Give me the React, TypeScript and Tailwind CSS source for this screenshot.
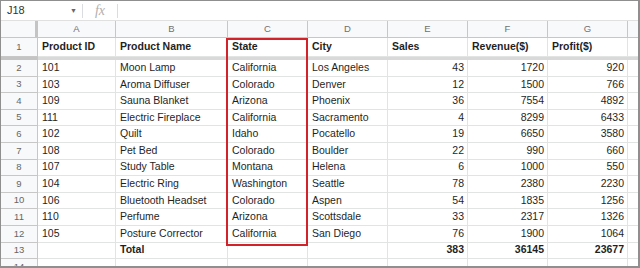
import React from "react";

const rows: (string | number)[][] = [
  [101, "Moon Lamp", "California", "Los Angeles", 43, 1720, 920],
  [103, "Aroma Diffuser", "Colorado", "Denver", 12, 1500, 766],
  [109, "Sauna Blanket", "Arizona", "Phoenix", 36, 7554, 4892],
  [111, "Electric Fireplace", "California", "Sacramento", 4, 8299, 6433],
  [102, "Quilt", "Idaho", "Pocatello", 19, 6650, 3580],
  [108, "Pet Bed", "Colorado", "Boulder", 22, 990, 660],
  [107, "Study Table", "Montana", "Helena", 6, 1000, 550],
  [104, "Electric Ring", "Washington", "Seattle", 78, 2380, 2230],
  [106, "Bluetooth Headset", "Colorado", "Aspen", 54, 1835, 1256],
  [110, "Perfume", "Arizona", "Scottsdale", 33, 2317, 1326],
  [105, "Posture Corrector", "California", "San Diego", 76, 1900, 1064],
];

const widths = ["w-[78px]", "w-[112px]", "w-[80px]", "w-[80px]", "w-[80px]", "w-[80px]", "w-[80px]"];

function RowNum({ n, h }: { n: React.ReactNode; h: string }) {
  return (
    <div
      className={`w-[37px] shrink-0 ${h} bg-[#f8f9fa] border-r border-b border-[#c7c7c7] flex items-center justify-center text-[9.5px] text-[#666]`}
    >
      {n}
    </div>
  );
}

function Cell({
  w,
  children,
  right,
  bold,
}: {
  w: string;
  children?: React.ReactNode;
  right?: boolean;
  bold?: boolean;
}) {
  return (
    <div
      className={`${w} shrink-0 h-full border-r border-b border-[#e2e3e3] flex items-center ${
        right ? "justify-end pr-[3px]" : "pl-[4px]"
      } ${bold ? "font-bold" : ""} text-[10.5px] text-[#1f1f1f] whitespace-nowrap overflow-hidden`}
    >
      {children}
    </div>
  );
}

export default function App() {
  return (
    <div className="w-[640px] h-[268px] overflow-hidden bg-white border-l border-t border-r-2 border-b-2 border-[#8f8f8f] flex flex-col relative font-['Liberation_Sans',Arial,sans-serif]">
      {/* formula bar */}
      <div className="h-[20px] shrink-0 flex items-center border-b border-[#e0e0e0] bg-white">
        <div className="w-[81px] flex items-center pl-[6px] pr-[5px] justify-between">
          <span className="text-[11px] text-[#333]">J18</span>
          <span className="text-[7px] text-[#666] leading-none">▼</span>
        </div>
        <div className="w-px h-[14px] bg-[#dadce0]" />
        <div className="w-[34px] flex justify-center">
          <span className="italic text-[14px] text-[#b0b0b0] font-['Liberation_Serif',serif] leading-none">
            fx
          </span>
        </div>
        <div className="w-px h-[14px] bg-[#dadce0]" />
      </div>

      {/* column headers */}
      <div className="h-[17px] shrink-0 flex">
        <div className="w-[37px] shrink-0 h-full bg-[#f8f9fa] border-b border-[#c7c7c7] flex justify-end">
          <div className="w-[3px] h-full bg-[#c4c4c4]" />
        </div>
        {["A", "B", "C", "D", "E", "F", "G"].map((l, i) => (
          <div
            key={l}
            className={`${widths[i]} shrink-0 h-full bg-[#f8f9fa] border-r border-b border-[#c7c7c7] flex items-center justify-center text-[9.5px] text-[#707070]`}
          >
            {l}
          </div>
        ))}
        <div className="flex-1 h-full bg-[#f8f9fa] border-b border-[#c7c7c7]" />
      </div>

      {/* row 1 */}
      <div className="h-[19px] shrink-0 flex">
        <RowNum n={1} h="h-full" />
        {["Product ID", "Product Name", "State", "City", "Sales", "Revenue($)", "Profit($)"].map((t, i) => (
          <Cell key={t} w={widths[i]} bold>
            {t}
          </Cell>
        ))}
        <div className="flex-1 border-b border-[#e2e3e3]" />
      </div>
      <div className="h-[3px] shrink-0 flex">
        <div className="w-[37px] bg-[#c4c4c4]" />
        <div className="flex-1 bg-[#d9d9d9]" />
      </div>

      {rows.map((r, ri) => (
        <div key={ri} className="h-[16.6px] shrink-0 flex">
          <RowNum n={ri + 2} h="h-full" />
          {r.map((v, i) => (
            <Cell key={i} w={widths[i]} right={i === 0 ? false : typeof v === "number"}>
              {v}
            </Cell>
          ))}
          <div className="flex-1 border-b border-[#e2e3e3]" />
        </div>
      ))}

      {/* total row */}
      <div className="h-[16.6px] shrink-0 flex">
        <RowNum n={13} h="h-full" />
        <Cell w={widths[0]} />
        <Cell w={widths[1]} bold>
          Total
        </Cell>
        <Cell w={widths[2]} />
        <Cell w={widths[3]} />
        <Cell w={widths[4]} right bold>
          383
        </Cell>
        <Cell w={widths[5]} right bold>
          36145
        </Cell>
        <Cell w={widths[6]} right bold>
          23677
        </Cell>
        <div className="flex-1 border-b border-[#e2e3e3]" />
      </div>

      <div className="h-[16px] shrink-0 flex">
        <RowNum n={14} h="h-full" />
        {widths.map((w, i) => (
          <Cell key={i} w={w} />
        ))}
        <div className="flex-1" />
      </div>

      {/* red highlight box */}
      <div className="absolute left-[225px] top-[37px] w-[82px] h-[208px] border-[2.5px] border-[#d2232a] pointer-events-none" />
    </div>
  );
}
